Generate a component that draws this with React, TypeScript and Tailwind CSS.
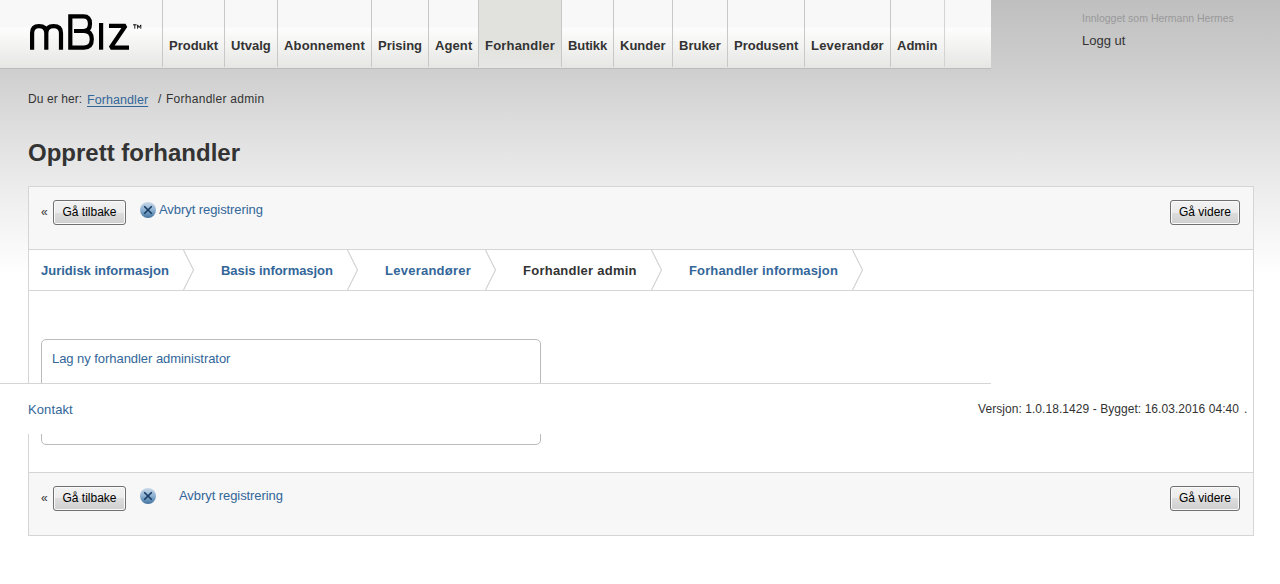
import React from "react";

const tabs = [
  { label: "Produkt", width: "w-[62px]", tracking: "tracking-normal" },
  { label: "Utvalg", width: "w-[53px]", tracking: "tracking-normal" },
  { label: "Abonnement", width: "w-[94px]", tracking: "tracking-[0.15px]" },
  { label: "Prising", width: "w-[57px]", tracking: "tracking-normal" },
  { label: "Agent", width: "w-[50px]", tracking: "tracking-[0.1px]" },
  { label: "Forhandler", width: "w-[83px]", tracking: "tracking-[0.2px]", active: true },
  { label: "Butikk", width: "w-[52px]", tracking: "tracking-[-0.1px]" },
  { label: "Kunder", width: "w-[59px]", tracking: "tracking-normal" },
  { label: "Bruker", width: "w-[55px]", tracking: "tracking-normal" },
  { label: "Produsent", width: "w-[77px]", tracking: "tracking-normal" },
  { label: "Leverandør", width: "w-[86px]", tracking: "tracking-[0.2px]" },
  { label: "Admin", width: "w-[54px]", tracking: "tracking-normal" },
];

const steps = [
  { label: "Juridisk informasjon", width: "w-[180px]", tracking: "tracking-normal" },
  { label: "Basis informasjon", width: "w-[164px]", tracking: "tracking-[-0.05px]" },
  { label: "Leverandører", width: "w-[138px]", tracking: "tracking-[0.25px]" },
  { label: "Forhandler admin", width: "w-[166px]", tracking: "tracking-[0.25px]", active: true },
  { label: "Forhandler informasjon", width: "w-[201px]", tracking: "tracking-[0.14px]" },
];

function Logo() {
  return (
    <svg className="ml-7 mt-3 h-10 w-[116px] shrink-0" viewBox="28 12 116 40" fill="none" stroke="#000" strokeWidth="4.2">
      <path d="M32.1 49.7V33Q32.1 26.1 39 26.1Q46.3 26.1 46.3 33V49.7M46.3 33Q46.3 26.1 53.6 26.1Q61 26.1 61 33V49.7" />
      <path d="M74 31H83.5Q90 31 90 23.7Q90 16.3 83.5 16.3H70.3V47.6H84Q91.8 47.6 91.8 39.3Q91.8 31 84 31" />
      <path d="M101.1 23V49.7" />
      <path d="M109 25.8H125.5L110.7 47.6H129" strokeLinejoin="bevel" />
      <path d="M133 24.8h3.6M134.8 24.5v4.2M137.6 28.7v-3.8l1.6 2.6 1.6-2.6v3.8" strokeWidth="0.9" />
    </svg>
  );
}

function CancelIcon() {
  return (
    <svg className="h-4 w-4 shrink-0" viewBox="0 0 16 16">
      <defs>
        <linearGradient id="cancelFill" x1="0" y1="0" x2="0" y2="1">
          <stop offset="0" stopColor="#c9d9e8" />
          <stop offset="0.5" stopColor="#8db1d3" />
          <stop offset="1" stopColor="#41729f" />
        </linearGradient>
      </defs>
      <circle cx="8" cy="8" r="8" fill="url(#cancelFill)" />
      <path d="M4.2 4.2L11.8 11.8M11.8 4.2L4.2 11.8" stroke="#173a60" strokeWidth="1.6" />
    </svg>
  );
}

function Button({ children, className }: { children: React.ReactNode; className: string }) {
  return (
    <button
      className={`h-[25px] shrink-0 rounded-[3px] border border-[#707070] bg-[linear-gradient(#f2f2f2,#ebebeb_50%,#dddddd_50%,#cfcfcf)] pb-px text-[12px] leading-[22px] whitespace-nowrap text-black shadow-[inset_0_0_0_1px_#fafafa] ${className}`}
    >
      {children}
    </button>
  );
}

function ActionBar({ gap }: { gap: string }) {
  return (
    <div className="flex h-[62px] items-start bg-[#f7f7f7] pr-[13px] pl-3 pt-[13px]">
      <span className="w-3 text-[12px] leading-[24px]">«</span>
      <Button className="w-[73px]">Gå tilbake</Button>
      <a className={`ml-[14px] mt-[2px] flex items-center text-[13px] leading-4 text-[#336699] ${gap}`}>
        <CancelIcon />
        <span className="tracking-[-0.07px]">Avbryt registrering</span>
      </a>
      <Button className="ml-auto w-[70px]">Gå videre</Button>
    </div>
  );
}

export default function App() {
  return (
    <div className="relative h-[584px] w-[1280px] overflow-hidden bg-[linear-gradient(#bfbfc0_0px,#cecece_68px,#e0e0e0_135px,#eeeeee_195px,#ffffff_275px)] font-['Liberation_Sans',Arial,sans-serif] text-[#333]">
      <div className="flex h-[69px]">
        <header className="flex h-[69px] w-[991px] border-b border-[#bcbcbc] bg-[linear-gradient(#f8f8f8_0px,#f8f8f8_27px,#fdfdfd_28px,#e6e6e3_68px)]">
          <Logo />
          <nav className="ml-[18px] flex h-[67px]">
            {tabs.map((tab) => (
              <a
                key={tab.label}
                className={`border-l border-[#c8c8c8] pl-1.5 pt-[38px] text-[13px] leading-4 font-bold whitespace-nowrap ${tab.width} ${tab.tracking} ${
                  tab.active ? "bg-[linear-gradient(#e1e2dd_0px,#e1e2dd_42px,#e6e6e4_67px)]" : ""
                }`}
              >
                {tab.label}
              </a>
            ))}
            <span className="w-px bg-[#d4d4d4]" />
          </nav>
        </header>
        <div className="ml-[91px] pt-3">
          <div className="text-[10.5px] leading-[13px] whitespace-nowrap text-[#999]">Innlogget som Hermann Hermes</div>
          <a className="mt-2 block text-[13px] leading-4">Logg ut</a>
        </div>
      </div>

      <div className="flex h-[60px] pl-7 pt-[22px] text-[12px] leading-4 whitespace-nowrap">
        <span className="w-[59px] tracking-[0.08px]">Du er her:</span>
        <a className="mt-px w-[71px] text-[12.5px] tracking-[0.07px] text-[#336699] underline underline-offset-2">Forhandler</a>
        <span className="w-2">/</span>
        <span className="tracking-[0.27px]">Forhandler admin</span>
      </div>
      <h1 className="h-[57px] pl-7 pt-2 text-[24px] leading-8 font-bold">Opprett forhandler</h1>

      <main className="ml-7 w-[1226px] border border-[#d5d5d5] bg-white">
        <ActionBar gap="gap-[3px]" />
        <div className="flex h-[42px] border-y border-[#d5d5d5] pl-3">
          {steps.map((step) => (
            <div key={step.label} className={`flex justify-between whitespace-nowrap ${step.width}`}>
              <span
                className={`text-[13px] leading-[42px] font-bold ${step.tracking} ${step.active ? "text-[#333]" : "text-[#336699]"}`}
              >
                {step.label}
              </span>
              <svg className="mr-[26px] h-10 w-3 shrink-0" viewBox="0 0 12 40" fill="none">
                <path d="M0.5 0L10.5 20L0.5 40" stroke="#d0d0d0" strokeWidth="1.1" />
              </svg>
            </div>
          ))}
        </div>
        <div className="h-[181px] pl-3 pt-12">
          <div className="h-[106px] w-[500px] rounded-[5px] border border-[#bbb] pl-2.5 pt-[11px] text-[13px] leading-4 tracking-[-0.05px] text-[#336699]">
            Lag ny forhandler administrator
          </div>
        </div>
        <div className="border-t border-[#d5d5d5]">
          <ActionBar gap="gap-[23px]" />
        </div>
      </main>

      <footer className="absolute left-0 top-[383px] flex h-[51px] w-[991px] border-t border-[#d5d5d5] bg-white pl-7 pt-[17px] leading-4 whitespace-nowrap">
        <a className="mt-px w-[950px] shrink-0 text-[13px] tracking-[0.1px] text-[#336699]">Kontakt</a>
        <span className="w-[266px] shrink-0 text-[12px] tracking-[0.06px]">Versjon: 1.0.18.1429 - Bygget: 16.03.2016 04:40</span>
        <span className="text-[12px]">.</span>
      </footer>
    </div>
  );
}
